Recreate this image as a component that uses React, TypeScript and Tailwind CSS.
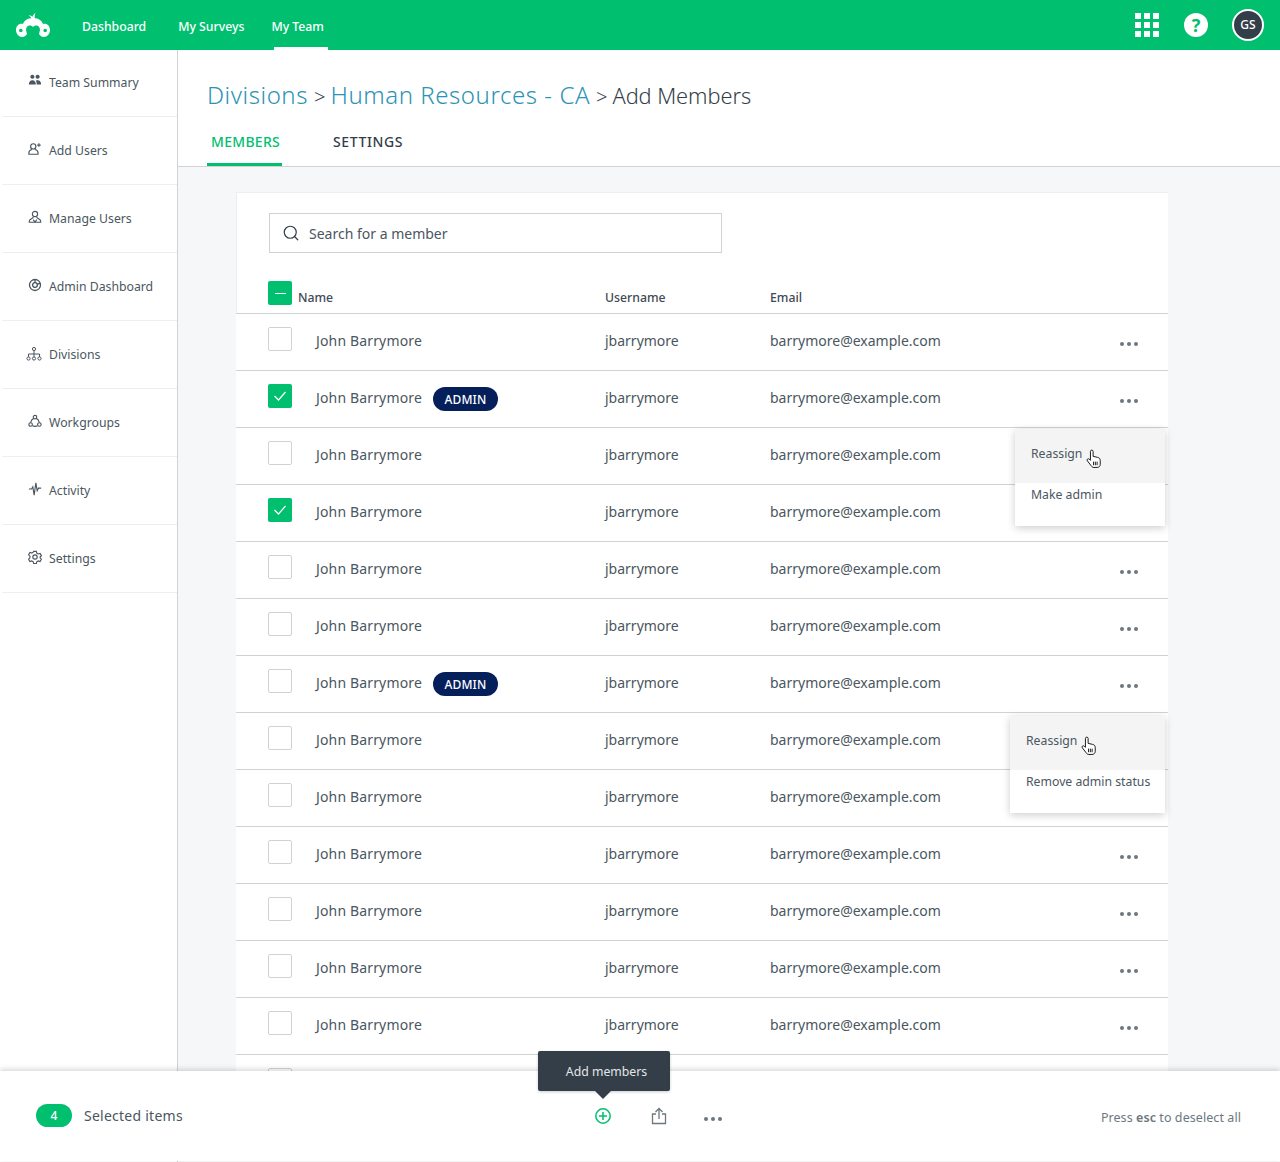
import React from 'react';
import { Search } from 'lucide-react';

const Check = () => (
  <svg width="14" height="14" viewBox="0 0 14 14" fill="none" stroke="white" strokeWidth="1.2">
    <path d="M1.5 7l4 4 7-8" />
  </svg>
);

const Dots = () => (
  <svg width="18" height="6" viewBox="0 0 18 6" fill="#6b787f">
    <circle cx="2" cy="3" r="2" />
    <circle cx="9" cy="3" r="2" />
    <circle cx="16" cy="3" r="2" />
  </svg>
);

const Hand = () => (
  <svg width="16" height="20" viewBox="0 0 18 22" className="shrink-0">
    <path
      d="M5 2.5c0-2 3-2 3 0V8l5 1.2c2 .5 3 1.500 3 3.300V17c0 2-1.500 3.500-3.500 3.500H9c-1.500 0-2.500-.7-3.300-2L1.500 13c-1-1.500.8-3 2.200-1.800L5 12.500z"
      fill="white"
      stroke="black"
      strokeWidth="1"
    />
    <path d="M8.500 14v4M10.500 14v4M12.500 14v4" stroke="black" strokeWidth="1" />
  </svg>
);

const sideItems = [
  { label: 'Team Summary', size: 14, shift: '', icon: <path d="M5 5.500a2.300 2.300 0 1 1 .01 0zM11 5.500a2.300 2.300 0 1 1 .01 0zM1 12c0-3 1.500-5 4-5s4 2 4 5zM10 12c0-2-.3-3.500-1.200-4.700C9.500 7 10.200 7 11 7c2.500 0 4 2 4 5z" fill="#4a5660" /> },
  { label: 'Add Users', size: 14, shift: '', icon: <g fill="none" stroke="#4a5660" strokeWidth="1.300"><circle cx="6" cy="5" r="3" /><path d="M4.500 8.500C2.500 9 1 10 1 12.500V14h10.500v-1.500c0-2.500-1.500-3.500-3.500-4" /><path d="M12.500 1.500v4M10.500 3.500h4" /></g> },
  { label: 'Manage Users', size: 14, shift: '', icon: <g fill="none" stroke="#4a5660" strokeWidth="1.300"><circle cx="8" cy="4.500" r="3" /><path d="M6 8c0 2-4.500 2-4.500 4.500V14h13v-1.500C14.500 10 10 10 10 8M8 14l-2-3M8 14l2-3" /></g> },
  { label: 'Admin Dashboard', size: 14, shift: '', icon: <g fill="none" stroke="#4a5660" strokeWidth="1.500"><circle cx="8" cy="8" r="6.300" /><circle cx="8" cy="8" r="2.700" /><path d="M8 1.700v3.600M14 6l-3.500 1" /></g> },
  { label: 'Divisions', size: 16, shift: '-ml-[2px]', icon: <g fill="none" stroke="#4a5660" strokeWidth="1"><circle cx="8" cy="3" r="1.600" /><circle cx="2.500" cy="12.500" r="1.600" /><circle cx="8" cy="12.500" r="1.600" /><circle cx="13.500" cy="12.500" r="1.600" /><path d="M8 4.600v6.300M2.500 10.900V8h11v2.900" /></g> },
  { label: 'Workgroups', size: 14, shift: '', icon: <g fill="none" stroke="#4a5660" strokeWidth="1.300"><circle cx="8" cy="3.500" r="2" /><circle cx="3" cy="12" r="2" /><circle cx="13" cy="12" r="2" /><path d="M6.500 5C4.500 6 3.300 7.800 3 10M9.500 5c2 1 3.200 2.800 3.500 5M5 13.500c2 .8 4 .8 6 0" /></g> },
  { label: 'Activity', size: 14, shift: '', icon: <path d="M1 8h3l1.500-2.500L7 15 9 1l1.500 9L12 7h3" fill="none" stroke="#4a5660" strokeWidth="1.300" /> },
  { label: 'Settings', size: 14, shift: '', icon: <g fill="none" stroke="#4a5660" strokeWidth="1.300"><circle cx="8" cy="8" r="2.500" /><path d="M6.500 1.500h3l.5 2 1.800 1 2-.6 1.500 2.600-1.500 1.500v1l1.500 1.500-1.500 2.600-2-.6-1.800 1-.5 2h-3l-.5-2-1.800-1-2 .6L.7 10.500 2.200 9V7L.7 5.500l1.500-2.600 2 .6L6 2.500z" /></g> },
];

const rows = [
  { checked: false, admin: false, dots: true },
  { checked: true, admin: true, dots: true },
  { checked: false, admin: false, dots: false },
  { checked: true, admin: false, dots: false },
  { checked: false, admin: false, dots: true },
  { checked: false, admin: false, dots: true },
  { checked: false, admin: true, dots: true },
  { checked: false, admin: false, dots: false },
  { checked: false, admin: false, dots: false },
  { checked: false, admin: false, dots: true },
  { checked: false, admin: false, dots: true },
  { checked: false, admin: false, dots: true },
  { checked: false, admin: false, dots: true },
];

const Checkbox = ({ checked }: { checked: boolean }) => (
  <span className={`w-6 h-6 shrink-0 rounded-[2px] flex items-center justify-center ${checked ? 'bg-[#00bf6f]' : 'border border-[#d0d2d3] bg-white'}`}>
    {checked && <Check />}
  </span>
);

const Menu = ({ second, place }: { second: string; place: string }) => (
  <div className={`absolute ${place} bg-white shadow-[0_2px_8px_rgba(0,0,0,0.2)] h-[97px] text-[12.250px] text-[#4a5660]`}>
    <div className="h-[54px] bg-[#f4f4f4] flex items-start pt-[16px] pl-4">
      <span className="leading-[18px]">Reassign</span>
      <span className="ml-[4px] mt-[4px]"><Hand /></span>
    </div>
    <div className="pl-4 pt-[3px] leading-[18px]">{second}</div>
  </div>
);

export default function App() {
  return (
    <div className="relative w-[1280px] h-[1162px] overflow-hidden bg-white font-['Noto_Sans',sans-serif] text-[#3f4a54]">
      <header className="relative z-10 h-[50px] bg-[#00bf6f] flex items-center text-white">
        <svg width="34" height="24" viewBox="0 0 34 24" className="ml-[16px]" fill="white">
          <path d="M17 5C11 5 8 8 7 11 3 10 0 13 0 17c0 4 3 7 6 7 3 0 4-2 5-3l-1-4c0-4 3.500-6 7-3 3.500-3 7-1 7 3l-1 4c1 1 2 3 5 3 3 0 6-3 6-7 0-4-3-7-7-6-1-3-4-6-10-6z" />
          <path d="M15.500 6c-.3-1.500-1.200-2.800-2.800-3.800 1.500 0 2.800.6 3.800 1.600.4-1.500 1.300-2.800 3-3.800-.8 2-1 3.700-.7 6z" />
          <circle cx="4.800" cy="17.500" r="1.800" fill="#00bf6f" />
          <circle cx="29.200" cy="17.500" r="1.800" fill="#00bf6f" />
        </svg>
        <nav className="flex h-full text-[12.250px] font-medium ml-[32px]">
          <a className="flex items-center mr-[32px] pt-[5px]">Dashboard</a>
          <a className="flex items-center mr-[27px] pt-[5px]">My Surveys</a>
          <a className="relative flex items-center pt-[5px]">
            My Team
            <span className="absolute left-[3px] bottom-0 w-[54px] h-[3px] bg-white" />
          </a>
        </nav>
        <div className="ml-auto flex items-center">
          <div className="grid grid-cols-3 gap-[3px] mr-[25px]">
            {Array.from({ length: 9 }).map((_, i) => (
              <span key={i} className="w-[6px] h-[6px] bg-white" />
            ))}
          </div>
          <div className="w-6 h-6 rounded-full bg-white text-[#00bf6f] flex items-center justify-center font-bold text-[18px] mr-[24px]">?</div>
          <div className="w-8 h-8 rounded-full bg-[#333e48] border-2 border-white flex items-center justify-center text-[12px] font-medium mr-4">GS</div>
        </div>
      </header>

      <div className="flex h-[1112px]">
        <aside className="w-[178px] shrink-0 -mt-px border-r border-[#d0d2d3] bg-white">
          {sideItems.map((item) => (
            <div key={item.label} className="h-[68px] ml-[2px] border-b border-[#edeeee] flex items-start pt-[24px] pl-[26px] text-[12.250px] text-[#4a5660]">
              <svg width={item.size} height={item.size} viewBox="0 0 16 16" className={`mt-px mr-[7px] shrink-0 ${item.shift}`}>{item.icon}</svg>
              <span className="leading-[20px]">{item.label}</span>
            </div>
          ))}
        </aside>

        <main className="flex-1 bg-[#f6f7f8]">
          <div className="h-[117px] bg-white border-b border-[#d0d2d3] pl-[29px]">
            <div className="h-[75px] pt-[26px] flex items-baseline font-light leading-[38px]">
              <span className="text-[#2d93b5] text-[24px] tracking-[0.55px]">Divisions</span>
              <span className="text-[#333e48] ml-[6px] mr-[5px] text-[20px]">&gt;</span>
              <span className="text-[#2d93b5] text-[24px] tracking-[0.55px]">Human Resources - CA</span>
              <span className="text-[#333e48] ml-[6px] mr-[5px] text-[20px]">&gt;</span>
              <span className="text-[#333e48] text-[21.750px] tracking-[-0.05px]">Add Members</span>
            </div>
            <div className="flex text-[14px] font-medium h-[41px]">
              <div className="w-[75px] pl-[4px] text-[#00bf6f] border-b-[3px] border-[#00bf6f] leading-[34px] tracking-[0.3px]">MEMBERS</div>
              <div className="ml-[51px] text-[#333e48] leading-[34px] tracking-[0.6px]">SETTINGS</div>
            </div>
          </div>

          <section className="relative mt-[25px] ml-[58px] w-[932px] bg-white border-t border-[#edeeee]">
            <div className="h-[120px] border-l border-[#edeeee] relative">
              <div className="ml-[32px] pt-[20px]">
                <div className="w-[453px] h-[40px] border border-[#d0d2d3] flex items-center pl-3 text-[14px] text-[#4a5660]">
                  <Search size={18} strokeWidth={1.600} className="mr-[9px] text-[#333e48]" />
                  Search for a member
                </div>
              </div>
              <div className="flex items-end mt-[28px] pl-[31px] text-[12.250px] font-medium text-[#3f4a54]">
                <span className="w-6 h-6 rounded-[2px] bg-[#00bf6f] flex items-center justify-center shrink-0">
                  <span className="w-[11px] h-px bg-white" />
                </span>
                <span className="ml-[6px] w-[307px] leading-[18px] mb-[-2px]">Name</span>
                <span className="w-[165px] leading-[18px] mb-[-2px]">Username</span>
                <span className="leading-[18px] mb-[-2px]">Email</span>
              </div>
            </div>
            {rows.map((r, i) => (
              <div key={i} className="h-[57px] border-t border-[#d0d2d3] flex items-start pl-[32px] pt-[13px] text-[14px] text-[#4a5660]">
                <Checkbox checked={r.checked} />
                <div className="w-[289px] ml-[24px] flex items-center h-[20px] mt-[3px] tracking-[0.15px]">
                  John Barrymore
                  {r.admin && (
                    <span className="ml-[11px] h-6 w-[65px] mt-[4px] pt-px rounded-full bg-[#051f5b] text-white text-[12px] font-medium tracking-[0.1px] flex items-center justify-center">ADMIN</span>
                  )}
                </div>
                <span className="w-[165px] leading-[20px] mt-[4px]">jbarrymore</span>
                <span className="w-[350px] leading-[20px] mt-[4px]">barrymore@example.com</span>
                {r.dots && <span className="mt-[14px] flex"><Dots /></span>}
              </div>
            ))}
            {/* last row is mostly under the bottom bar, only its checkbox peeks out */}
            <div className="h-[57px] border-t border-[#d0d2d3] pl-[32px] pt-[13px]">
              <Checkbox checked={false} />
            </div>
            <Menu place="left-[779px] top-[236px] w-[150px]" second="Make admin" />
            <Menu place="left-[774px] top-[523px] w-[155px]" second="Remove admin status" />
          </section>
        </main>
      </div>

      <div className="absolute left-0 right-0 top-[1071px] h-[90px] bg-white shadow-[0_-2px_5px_rgba(0,0,0,0.15)] flex items-center text-[14px] text-[#4a5660]">
        <span className="ml-[36px] w-9 h-[23px] -mt-px rounded-full bg-[#00bf6f] text-white text-[12px] font-medium flex items-center justify-center">4</span>
        <span className="ml-3 -mt-[2px] tracking-[0.25px]">Selected items</span>
        <div className="absolute left-[594px] top-[36px]">
          <svg width="18" height="18" viewBox="0 0 18 18" fill="none" stroke="#00bf6f" strokeWidth="1.500">
            <circle cx="9" cy="9" r="7.200" />
            <path d="M9 5v8M5 9h8" />
          </svg>
        </div>
        <div className="absolute left-[651px] top-[36px]">
          <svg width="16" height="18" viewBox="0 0 16 18" fill="none" stroke="#6b787f" strokeWidth="1.300">
            <path d="M5 7H1.500v9.500h13V7H11M8 12V1.500M4.500 5L8 1.500 11.500 5" />
          </svg>
        </div>
        <div className="absolute left-[704px] top-[45px] flex"><Dots /></div>
        <div className="absolute right-[39px] top-[38px] text-[12.500px] tracking-[0.07px] text-[#6b787f] leading-[18px]">
          Press <b className="font-semibold">esc</b> to deselect all
        </div>
      </div>

      <div className="absolute left-[538px] top-[1051px] w-[132px] h-[40px] pl-[5px] pt-[3px] rounded-[2px] bg-[#333e48] text-[#e4e6e8] text-[12.250px] flex items-center justify-center shadow-[0_1px_3px_rgba(0,0,0,0.2)]">
        Add members
        <span className="absolute left-[57px] top-[40px] w-0 h-0 border-x-[8px] border-x-transparent border-t-[8px] border-t-[#333e48]" />
      </div>
    </div>
  );
}
